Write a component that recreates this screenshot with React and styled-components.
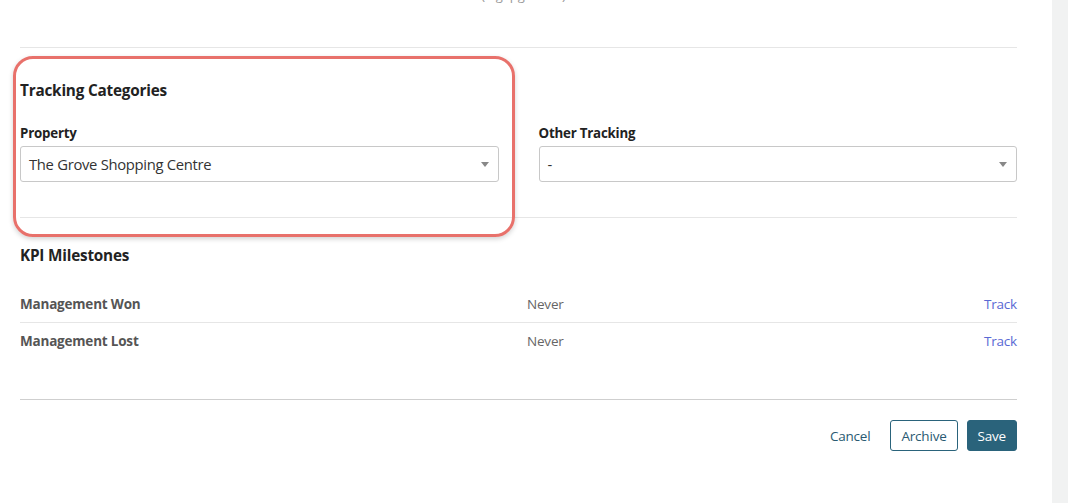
import React from "react";
import styled, { createGlobalStyle } from "styled-components";

const GlobalStyle = createGlobalStyle`
  * {
    margin: 0;
    padding: 0;
    box-sizing: border-box;
  }
  html, body {
    height: 100%;
    overflow: hidden;
  }
  body {
    background: #ffffff;
    font-family: "Open Sans", "Noto Sans", sans-serif;
    color: #333;
  }
`;

const Page = styled.div`
  display: flex;
  height: 503px;
`;

const Content = styled.main`
  flex: 1;
  padding: 0 35px 0 20px;
`;

const Rail = styled.aside`
  width: 16px;
  background: #f1f2f2;
`;

// the hint line above is scrolled out of view, only its descenders show
const Clipped = styled.div`
  height: 18px;
  margin-top: -14px;
  line-height: 18px;
  text-align: center;
  padding-left: 10px;
  font-size: 13px;
  color: #9a9a9a;
`;

const Divider = styled.hr`
  border: 0;
  border-top: 1px solid ${(p) => p.$color || "#e6e6e6"};
  margin-top: ${(p) => p.$top || 0}px;
`;

const Section = styled.section`
  position: relative;
  padding-top: ${(p) => p.$pad || 0}px;
`;

const Heading = styled.h3`
  font-size: 15.3px;
  font-weight: 700;
  color: #222;
  letter-spacing: -0.2px;
`;

const Grid = styled.div`
  display: grid;
  grid-template-columns: 1fr 1fr;
  column-gap: 40px;
  margin-top: 24px;
`;

const Field = styled.div`
  display: flex;
  flex-direction: column;
`;

const Label = styled.label`
  font-size: 13.3px;
  font-weight: 700;
  color: #222;
  letter-spacing: -0.2px;
  margin-bottom: 4px;
`;

const Select = styled.div`
  position: relative;
  height: 36px;
  border: 1px solid #c8c8c8;
  border-radius: 3px;
  display: flex;
  align-items: center;
  padding: 0 8px;
  font-size: 14.8px;
  letter-spacing: -0.3px;
  color: #333;
`;

const Caret = styled.span`
  position: absolute;
  right: 9px;
  top: 15px;
  width: 0;
  height: 0;
  border-left: 4px solid transparent;
  border-right: 4px solid transparent;
  border-top: 5px solid #888;
`;

const Highlight = styled.div`
  position: absolute;
  left: -7px;
  top: 8px;
  width: 502px;
  height: 181px;
  border: 3px solid #e8716b;
  border-radius: 20px;
  box-shadow: 0 2px 5px rgba(0, 0, 0, 0.18);
  pointer-events: none;
`;

const Rows = styled.div`
  margin-top: 21px;
`;

const Row = styled.div`
  display: grid;
  grid-template-columns: 507px 1fr auto;
  align-items: center;
  height: 37px;
  font-size: 13.5px;
  border-bottom: 1px solid ${(p) => (p.$last ? "transparent" : "#e6e6e6")};
`;

const RowLabel = styled.span`
  font-weight: 700;
  color: #555;
  letter-spacing: -0.2px;
`;

const RowValue = styled.span`
  color: #666;
  letter-spacing: -0.2px;
`;

const TrackLink = styled.a`
  color: #5a69d4;
  text-decoration: none;
  letter-spacing: -0.2px;
`;

const Actions = styled.div`
  display: flex;
  justify-content: flex-end;
  align-items: center;
  gap: 9px;
  margin-top: 20px;
`;

const Button = styled.button`
  height: 31px;
  padding: 0 ${(p) => (p.$variant === "link" ? "0" : "10px")};
  margin-right: ${(p) => (p.$variant === "link" ? "10px" : "0")};
  border-radius: 3px;
  font-family: inherit;
  font-size: 13.5px;
  letter-spacing: -0.2px;
  cursor: pointer;
  border: 1px solid ${(p) => (p.$variant === "link" ? "transparent" : "#2a637b")};
  background: ${(p) => (p.$variant === "primary" ? "#2a637b" : "#fff")};
  color: ${(p) => (p.$variant === "primary" ? "#fff" : "#2a5a72")};
`;

export default function App() {
  return (
    <>
      <GlobalStyle />
      <Page>
        <Content>
          <Clipped>(e.g. pg 1 of 2)</Clipped>
          <Divider $top={43} />

          <Section $pad={32}>
            <Heading>Tracking Categories</Heading>
            <Grid>
              <Field>
                <Label>Property</Label>
                <Select>
                  The Grove Shopping Centre
                  <Caret />
                </Select>
              </Field>
              <Field>
                <Label>Other Tracking</Label>
                <Select>
                  -
                  <Caret />
                </Select>
              </Field>
            </Grid>
            <Divider $top={35} />
            <Highlight />
          </Section>

          <Section $pad={27}>
            <Heading>KPI Milestones</Heading>
            <Rows>
              <Row>
                <RowLabel>Management Won</RowLabel>
                <RowValue>Never</RowValue>
                <TrackLink href="#">Track</TrackLink>
              </Row>
              <Row $last>
                <RowLabel>Management Lost</RowLabel>
                <RowValue>Never</RowValue>
                <TrackLink href="#">Track</TrackLink>
              </Row>
            </Rows>
          </Section>

          <Divider $color="#cfcfcf" $top={39} />
          <Actions>
            <Button $variant="link">Cancel</Button>
            <Button>Archive</Button>
            <Button $variant="primary">Save</Button>
          </Actions>
        </Content>
        <Rail />
      </Page>
    </>
  );
}
